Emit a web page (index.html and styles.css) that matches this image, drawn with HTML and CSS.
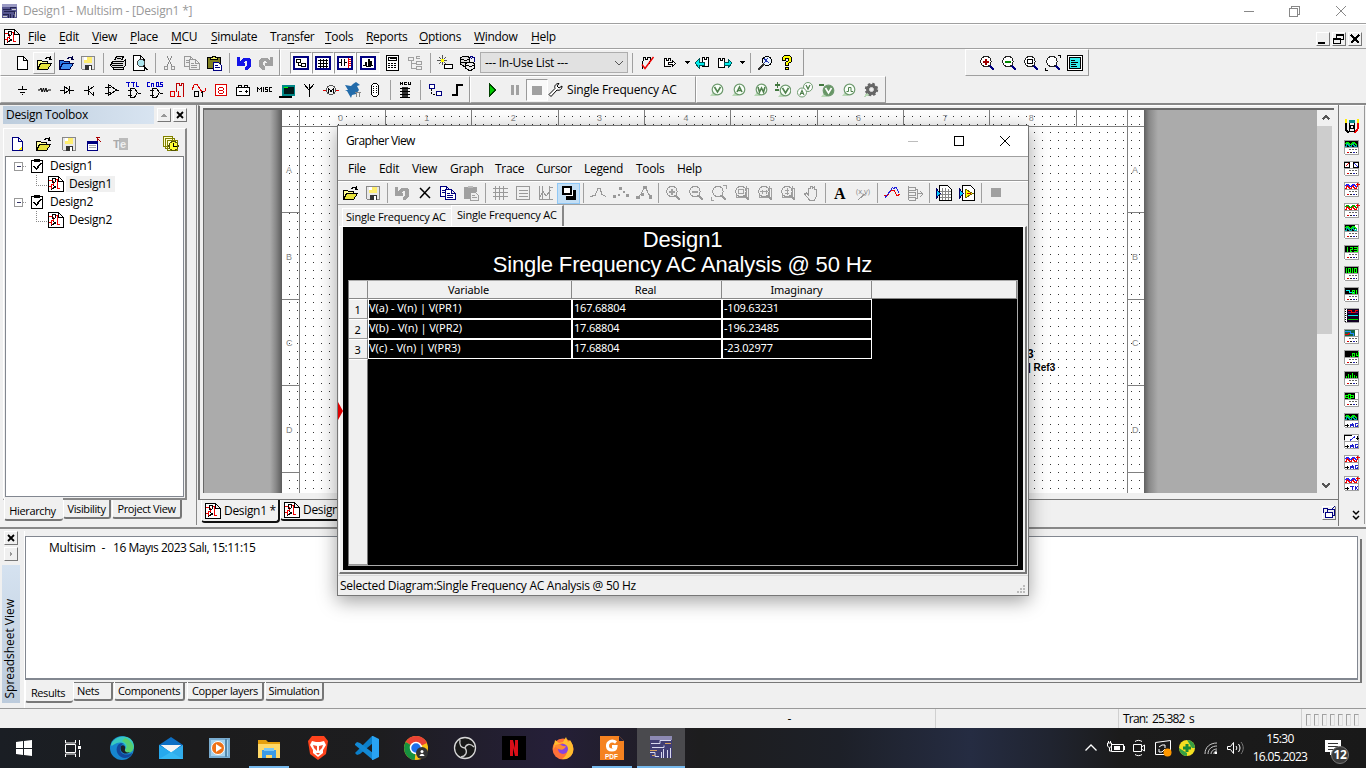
FILE: index.html
```html
<!DOCTYPE html>
<html lang="en">
<head>
<meta charset="utf-8">
<title>Design1 - Multisim - [Design1 *]</title>
<link rel="stylesheet" href="styles.css">
</head>
<body>
<header class="titlebar"><i data-icon="app"></i><span class="title-text">Design1 - Multisim - [Design1 *]</span><i data-icon="winmin" class="caption-btn"></i><i data-icon="winrestore" class="caption-btn"></i><i data-icon="winclose" class="caption-btn last"></i></header>
<nav class="menubar"><i data-icon="doc"></i>
<div class="main-menu"><span><u>F</u>ile</span><span><u>E</u>dit</span><span><u>V</u>iew</span><span><u>P</u>lace</span><span><u>M</u>CU</span><span><u>S</u>imulate</span><span>Tra<u>n</u>sfer</span><span><u>T</u>ools</span><span><u>R</u>eports</span><span><u>O</u>ptions</span><span><u>W</u>indow</span><span><u>H</u>elp</span></div>
<div class="mdi"><b data-icon="mdimin"></b><b data-icon="mdirestore"></b><b data-icon="mdiclose"></b></div></nav>
<div class="toolrow row1">
<div class="bar standard" data-tools="new open* openblue save | print preview | cut copygray pasteoil | undo redo"></div>
<div class="bar view" data-tools="hier! grid! sheet! wave!+ calc+ treegray | wizard database+"><div class="combo"><span>--- In-Use List ---</span><i data-icon="chev"></i></div></div>
<div class="bar tools2" data-tools="| erc out+ arr back fwd+ arr | find help"></div>
<div class="bar zoombar" data-tools="zin zout zarea zfit zfull"></div>
</div>
<div class="toolrow row2">
<div class="bar comps" data-tools="source resistor diode transistor opamp ttl cmos mixdig mixed indicator power misc periph rf motor ni connector | chip | hb bus"></div>
<div class="bar sim"><div class="simicons" data-tools="play pause stop!"></div><i data-icon="wrench"></i><span class="sim-label">Single Frequency AC</span></div>
<div class="bar probes" data-tools="pv pa pw pdv pav pvr pdig gear"></div>
</div>
<main class="middle">
<aside class="toolbox">
<div class="tb-caption"><span>Design Toolbox</span><b data-icon="uptri"></b><b data-icon="x"></b></div>
<div class="tb-frame">
<div class="tb-tools"><i data-icon="newy"></i><i data-icon="open"></i><i data-icon="save"></i><i data-icon="props"></i><i data-icon="te"></i><i data-icon="history" class="right"></i></div>
<div class="tree">
<div class="node"><i data-icon="minus"></i><i data-icon="check"></i><span>Design1</span></div>
<div class="node child"><i data-icon="doc"></i><span class="sel">Design1</span></div>
<div class="node"><i data-icon="minus"></i><i data-icon="check"></i><span>Design2</span></div>
<div class="node child"><i data-icon="doc"></i><span>Design2</span></div>
</div></div>
<div class="tabs tbtabs"><span class="on">Hierarchy</span><span>Visibility</span><span>Project View</span></div>
</aside>
<section class="workspace">
<div class="ws-frame"><div class="canvas"><div class="shade left"></div><svg class="sheet-page" id="sheet" width="862" height="384"></svg><div class="shade right"></div>
<div class="scroll"><i data-icon="sup"></i><div class="thumb"></div><i data-icon="sdown"></i></div></div></div>
<div class="doc-tabs"><div class="doctab on"><i data-icon="doc"></i><span>Design1 *</span></div><div class="doctab"><i data-icon="doc"></i><span>Design2</span></div><b data-icon="cascade" class="cascade"></b></div>
</section>
<aside class="instruments" id="instruments"></aside>
</main>
<section class="spreadsheet">
<div class="ss-side"><b data-icon="x"></b><b data-icon="righttri"></b><div class="ss-label"><span>Spreadsheet View</span></div></div>
<div class="ss-main"><div class="ss-log">Multisim &nbsp;-&nbsp; <span>16 Mayıs 2023 Salı, 15:11:15</span></div>
<div class="tabs sstabs"><span class="on">Results</span><span>Nets</span><span>Components</span><span>Copper layers</span><span>Simulation</span></div></div>
</section>
<footer class="status"><span class="dash">-</span><span class="blank"></span><span class="tran">Tran: 25.382 s</span><div class="leds"><s></s><s></s><s></s><s></s><s></s><s></s><s></s></div></footer>
<div class="taskbar">
<div class="apps"><i data-icon="t_win"></i><i data-icon="t_view"></i><i data-icon="t_edge"></i><i data-icon="t_mail"></i><i data-icon="t_media"></i><i data-icon="t_files" class="open"></i><i data-icon="t_brave"></i><i data-icon="t_code"></i><i data-icon="t_chrome"></i><i data-icon="t_obs"></i><i data-icon="t_netflix"></i><i data-icon="t_firefox"></i><i data-icon="t_pdf" class="open"></i><i data-icon="t_multi" class="active"></i></div>
<div class="tray"><i data-icon="y_up"></i><i data-icon="y_bat"></i><i data-icon="y_cam"></i><i data-icon="y_sync"></i><i data-icon="y_plus"></i><i data-icon="y_wifi"></i><i data-icon="y_vol"></i></div>
<div class="clock"><span class="time">15:30</span><span class="date">16.05.2023</span></div>
<div class="notif"><i data-icon="y_note"></i><span>12</span></div>
</div>
<div class="behind"><span class="b3">3</span><span>| Ref3</span></div>
<section class="grapher">
<div class="g-title"><span>Grapher View</span><i data-icon="winmin" class="dim"></i><i data-icon="gmax"></i><i data-icon="gclose"></i></div>
<div class="g-menu"><span>File</span><span>Edit</span><span>View</span><span>Graph</span><span>Trace</span><span>Cursor</span><span>Legend</span><span>Tools</span><span>Help</span></div>
<div class="g-tools" data-tools="open save | undogray del copy pastegray | ggrid glegend gcursor contrast^ | curve pts curvepts | gzin gzout gzfit gz1 gz2 gz3 hand | fontA xy | waves layers | excel labview | stopgray"></div>
<div class="g-tabs"><span>Single Frequency AC</span><span class="on">Single Frequency AC</span></div>
<div class="g-frame"><div class="g-black">
<div class="g-heading">Design1</div><div class="g-heading">Single Frequency AC Analysis @ 50 Hz</div>
<div class="g-table">
<div class="hd rowhd"></div><div class="hd">Variable</div><div class="hd">Real</div><div class="hd">Imaginary</div><div class="hd fill"></div>
<div class="num">1</div><div class="cell">V(a) - V(n) | V(PR1)</div><div class="cell v">167.68804</div><div class="cell v">-109.63231</div><div></div>
<div class="num">2</div><div class="cell">V(b) - V(n) | V(PR2)</div><div class="cell v">17.68804</div><div class="cell v">-196.23485</div><div></div>
<div class="num">3</div><div class="cell">V(c) - V(n) | V(PR3)</div><div class="cell v">17.68804</div><div class="cell v">-23.02977</div><div></div>
<div class="num rest"></div>
</div></div></div>
<div class="g-status"><span>Selected Diagram:Single Frequency AC Analysis @ 50 Hz</span><i data-icon="grip"></i></div>
<i data-icon="redtri" class="redtri"></i>
</section>
<script src="icons.js"></script>
</body>
</html>
```
FILE: styles.css
```css
*{box-sizing:border-box}
body{margin:0;width:1366px;height:768px;overflow:hidden;background:#f0f0f0;color:#000;font:12px/16px "Open Sans","Noto Sans",sans-serif;letter-spacing:-.32px;display:flex;flex-direction:column;position:relative}
i{font-style:normal;display:flex;align-items:center;justify-content:center;flex:none}
svg{display:block;flex:none}
u{text-decoration-thickness:1px;text-underline-offset:2px}
b[data-icon]{display:flex;align-items:center;justify-content:center;width:14px;height:14px;background:#f0f0f0;border:1px solid #fff;border-right-color:#777;border-bottom-color:#777;flex:none}
.titlebar{height:24px;background:#fff;border-bottom:1px solid #a0a0a0;display:flex;align-items:center;padding:0 0 2px 2px;color:#999;flex:none}
.title-text{margin-left:5px;flex:1;letter-spacing:-.21px}
.caption-btn{width:45px}
.caption-btn.last{width:50px}
.menubar{height:25px;display:flex;align-items:center;padding-left:4px;border-top:1px solid #fff;border-bottom:1px solid #a0a0a0;flex:none}
.main-menu{margin-left:8px;display:grid;grid-template-columns:31px 33px 38px 41px 40px 59px 55px 41px 53px 55px 57px 40px;flex:1}
.mdi{display:flex;gap:2px;padding:4px 4px 0 0}
.toolrow{height:27px;display:flex;flex:none}
.bar{display:flex;height:27px;align-items:center;border:1px solid #fff;border-right-color:#999;border-bottom-color:#a0a0a0;flex:none}
.tool{width:22px;height:22px;display:flex;align-items:center;justify-content:center;flex:none}
.tool.wide{width:24px}
.tool.arrow{width:9px}
.tool.pressed{border:1px solid #999;border-right-color:#fff;border-bottom-color:#fff;background:#f9f9f9}
.tool.raised{border:1px solid #fff;border-right-color:#999;border-bottom-color:#999}
.tool.lit{background:#c4dff5;border:1px solid #90c8f6;height:21px}
.sep{width:8px;height:20px;display:flex;flex:none}
.sep::before{content:"";margin:auto;width:1px;height:20px;background:#a0a0a0}
.standard{width:280px;padding-left:10px}
.view{width:348px;padding-left:9px;border-right:0}
.combo{width:148px;height:21px;border:1px solid #adadad;background:#e1e1e1;display:flex;align-items:center;justify-content:space-between;padding:0 0 0 4px;letter-spacing:-.25px;flex:none}
.tools2{width:176px;border-left:0;padding-left:0}
.zoombar{width:124px;margin-left:161px;padding-left:10px}
.comps{width:470px;padding-left:11px}
.sim{width:226px;padding-left:11px}
.simicons{display:flex}
.sim .sim-label{margin-left:3px;letter-spacing:-.18px}
.probes{width:190px;padding-left:9px}
.middle{height:423px;display:flex;flex:none;border-top:2px solid #888}
.toolbox{width:197px;border-right:1px solid #888;padding:1px 9px 0 3px;display:flex;flex-direction:column;flex:none;height:420px}
.tb-caption{height:18px;display:flex;align-items:center;gap:2px}
.tb-caption span{width:151px;height:18px;background:linear-gradient(90deg,#bdcddd,#d8e4f1);padding:1px 3px;margin-right:1px;letter-spacing:-.3px}
.tb-frame{height:372px;border:1px solid #fff;border-right:2px solid #888;border-bottom:2px solid #888;margin-top:4px;padding:2px 1px 0 1px;flex:none}
.tb-tools{height:25px;display:flex;align-items:center;padding:0 5px 0 4px;gap:10px}
.tb-tools .right{margin-left:auto}
.tree{height:341px;background:#fff;border:1px solid #828790;border-top-color:#777;padding:0 0 0 4px}
.node{height:18px;display:flex;align-items:center;gap:3px}
.node span{margin-left:2px;letter-spacing:-.28px}
.node.child{padding-left:26px;gap:1px}
.node.child::before{content:"";width:10px;height:10px;border:1px dotted #888;border-top:0;border-right:0;align-self:flex-start}
.node.child span{margin-left:1px;padding:0 3px}
.node .sel{background:#f0f0f0}
.tabs{display:flex;align-items:flex-start;font-size:11px;letter-spacing:-.38px}
.tabs span{border:1px solid #777;border-top:0;border-right:2px solid #777;border-bottom:2px solid #777;height:19px;text-align:center;border-radius:0 0 3px 3px;margin-right:1px;border-left-color:#fff;padding-top:1px}
.tabs .on{border-right:0;border-left-color:#fff;height:23px;padding:5px 3px 0 0;margin-top:-2px;background:#f0f0f0;z-index:1}
.tbtabs{margin-left:1px}
.tbtabs span{width:48px}.tbtabs .on{width:59px;margin-right:0}.tbtabs span:last-child{width:70px}
.workspace{width:1142px;flex:none;padding-left:1px;display:flex;flex-direction:column;border-right:1px solid #777}
.ws-frame{padding:2px 4px 2px 3px;height:395px;border-top:1px solid #fff;border-left:2px solid #777;border-bottom:1px solid #777;flex:none}
.canvas{height:385px;border-top:2px solid #696969;border-left:1px solid #696969;background:#ababab;display:flex;overflow:hidden}
.shade.left{width:78px;background:linear-gradient(90deg,#ababab 66px,#888 72px,#5b5b5b 78px)}
.shade.right{width:172px;background:linear-gradient(90deg,#606060,#888 5px,#ababab 14px)}
.sheet-page{background:#fff}
.scroll{width:17px;background:#f0f0f0;display:flex;flex-direction:column;margin-left:1px}
.scroll i{height:16px}
.scroll .thumb{height:208px;background:#cdcdcd;width:15px}
.scroll i:last-child{margin-top:auto}
.doc-tabs{display:flex;height:26px;padding-left:3px;align-items:flex-start}
.doctab{display:flex;align-items:center;height:21px;width:79px;padding-left:3px;border:1px solid #fff;border-top:0;border-right:2px solid #111;border-bottom:2px solid #111;border-radius:0 0 4px 4px;gap:3px;white-space:nowrap}
.doctab.on{height:23px}
.cascade{margin:6px 2px 0 auto}
.instruments{width:26px;flex:none;border-right:1px solid #999;border-top:1px solid #fff;padding:13px 0 0 5px;height:419px}
.instruments svg{margin-bottom:6px}
.instruments svg:last-child{margin:19px 0 0 6px}
.spreadsheet{height:181px;border-top:2px solid #888;display:flex;flex:none;padding-top:2px;margin-top:1px}
.ss-side{width:20px;padding-left:4px;display:flex;flex-direction:column;gap:2px}
.ss-label{width:18px;height:138px;margin:2px 0 0 -2px;background:linear-gradient(#d5e2f0,#bccbdc);display:flex;align-items:center;justify-content:center}
.ss-label span{writing-mode:vertical-rl;transform:rotate(180deg);letter-spacing:-.02px;white-space:nowrap;margin:30px 2px 0 0}
.ss-main{width:1336px;margin-left:4px;padding-top:5px;border-left:1px solid #fff}
.ss-log{height:144px;background:#fff;border:1px solid #828790;border-bottom-width:2px;box-shadow:inset 0 0 0 1px #fff,2px 2px #f0f0f0,4px 3px #777;padding:3px 0 0 23px;letter-spacing:-.2px;margin-right:2px}
.ss-log span{letter-spacing:-.48px;margin-left:2px}
.sstabs{margin-top:2px}
.sstabs span{width:40px}.sstabs .on{width:48px;margin-right:0}
.sstabs span:nth-child(3){width:71px}.sstabs span:nth-child(4){width:77px;margin-left:1px}.sstabs span:nth-child(5){width:59px}
.sstabs span:nth-child(2){text-align:left;padding-left:3px}
.status{height:20px;border-top:1px solid #999;display:flex;margin-top:auto;flex:none;line-height:20px}
.dash{width:936px;text-align:right;padding-right:144px;border-right:1px solid #d0d0d0}
.blank{width:183px;border-right:1px solid #d0d0d0}
.tran{width:183px;padding-left:4px;border-right:1px solid #d0d0d0;letter-spacing:-.8px;word-spacing:2px}
.leds{display:flex;padding:5px 0 0 4px;gap:3px}
.leds s{width:5px;height:12px;border:1px solid #a0a0a0;border-right-color:#ddd;border-bottom-color:#ddd}
.taskbar{height:40px;flex:none;display:flex;color:#fff;background:linear-gradient(90deg,#1a1e24 0,#1c1c1d 200px,#1d1d1f 380px,#251f38 550px,#1d1d1e 700px,#1d2028 840px,#252c42 970px,#202430 1050px,#1b1b1b 1120px,#191919)}
.apps{display:flex;width:1079px;gap:1px;padding-left:1px}
.apps i{width:48px;height:40px}
.apps i:first-child{margin-left:-1px}
.apps .open{border-bottom:2px solid #76b9ed;width:40px;margin:0 4px;padding-top:1px}
.apps .active{background:#4a4a4e;border-bottom:2px solid #76b9ed}
.tray{display:flex;width:168px}
.tray i{width:24px;height:40px}
.clock{width:66px;display:flex;flex-direction:column;text-align:center;padding-top:2px;letter-spacing:-.65px;line-height:18px}
.notif{width:53px;padding:12px 0 0 12px;position:relative}
.notif i{width:16px}
.notif span{position:absolute;left:18px;top:18px;width:18px;height:18px;border-radius:50%;background:#3a3a3a;border:1px solid #777;text-align:center;font-weight:bold;font-size:12px;line-height:15px}
.behind{position:absolute;left:1028px;top:347px;font:bold 10px/14px "Liberation Sans",sans-serif;letter-spacing:0;display:flex;flex-direction:column}
.b3{font-size:12px;margin-left:-1px}
.grapher{position:absolute;left:337px;top:125px;width:692px;height:471px;border:1px solid #777;background:#f0f0f0;box-shadow:0 5px 18px rgba(0,0,0,.38)}
.g-title{height:31px;background:#fff;border-bottom:1px solid #a0a0a0;display:flex;align-items:center;padding-left:8px}
.g-title span{flex:1;letter-spacing:-.6px}
.g-title i{width:46px}
.g-title .dim{opacity:.55}
.g-menu{height:24px;border-bottom:1px solid #999;display:grid;grid-template-columns:31px 33px 38px 45px 41px 48px 52px 41px 40px;padding:4px 0 0 10px;letter-spacing:-.3px}
.g-tools{height:24px;display:flex;align-items:center;border-top:1px solid #fff;border-bottom:1px solid #a0a0a0}
.g-tools .tool{width:23px}
.g-tools .sep{width:6px}
.g-tabs{height:21px;display:flex;padding:0 0 0 4px;align-items:flex-end;font-size:11px;letter-spacing:-.2px}
.g-tabs span{width:109px;height:18px;border-left:1px solid #fff;border-top:1px solid #fff;padding-left:3px;white-space:nowrap}
.g-tabs .on{width:113px;height:21px;border-right:2px solid #888;padding:1px 0 0 5px}
.g-frame{border:1px solid #fff;border-right:2px solid #777;border-bottom:2px solid #777;margin:0 1px;padding:0 3px 3px 3px;height:348px}
.g-black{height:343px;background:#000;width:680px;padding:0 5px}
.g-heading{font:22px/25px "Liberation Sans",Arial,sans-serif;letter-spacing:-.17px;color:#fff;text-align:center;margin-left:-1px}
.g-table{margin-top:3px;display:grid;grid-template-columns:19px 204px 150px 150px 1fr;grid-template-rows:18px 20px 20px 20px 1fr;height:286px;border:1px solid #aaa;border-left:1px solid #777;color:#fff;font:11px/17px "Noto Sans",sans-serif;letter-spacing:-.1px;width:670px}
.hd{background:#f0f0f0;color:#000;text-align:center;border-right:1px solid #888;border-bottom:1px solid #888}
.hd:nth-child(2){padding-right:2px}
.hd:nth-child(3){padding-right:2px}
.num{background:#f0f0f0;color:#000;text-align:center;border-right:1px solid #777;border-bottom:1px solid #999;border-top:1px solid #fff;line-height:19px;padding-right:1px}
.cell{border:1px solid #fff;line-height:16px;letter-spacing:-.05px}
.v{padding-left:1px;letter-spacing:-.2px}
.g-status{height:20px;border-top:1px solid #d8d8d8;margin-top:1px;display:flex;justify-content:space-between;padding:2px 2px 0 2px;letter-spacing:-.28px}
.redtri{position:absolute;left:0;top:276px}
```
FILE: icons.js
```js
const K='#000',G='#a0a0a0',N='#000080';
const p=(d,s=K,f='none',w=1)=>`<path d="${d}" stroke="${s}" fill="${f}" stroke-width="${w}"/>`;
const fl=(d,f=K)=>p(d,'none',f);
const t=(x,y,s,size,f,extra='')=>`<text x="${x}" y="${y}" font-size="${size}" fill="${f}" font-family="Liberation Sans" font-weight="bold" letter-spacing="0" ${extra}>${s}</text>`;
const c=(x,y,r,s,f='none',w=1)=>`<circle cx="${x}" cy="${y}" r="${r}" stroke="${s}" fill="${f}" stroke-width="${w}"/>`;
const I={};
I.app=fl('M0 1h15v14H0z','#56568f')+fl('M0 1h15v3H0z','#9b9bc5')+p('M1 6.5h7v-2h6M2 8.5h10v2M1 11.5h5v3M8.500 11v4M11.5 12v3','#23234f')+p('M10 6.500h4M1 13.500h4M13.500 9v5','#ccc');
I.doc=p('M.5.5h10l5 5v10H.5zM10.5.5v5h5',K,'#fff')+p('M1 4.5h3M1 10.5h2v3M11.5 12.5h-2v-9h-2M5.500 5v3h-2v2','#e00')+p('M4.500 2v5M5 2.500h2l1 1.500-1 2H5M5 9l3 3M7 9.500v1h-1M3 14l4-3');
I.new=p('M3.5 1.5h6l4 4v9h-10zM9.5 1.5v4h4',K,'#fff');
I.newy=p('M3.5 1.5h6l4 4v9h-10zM9.5 1.5v4h4',N,'#fff')+fl('M10 14l3-4v4z','#fe0');
const op=(a,b)=>p('M1.5 14.5v-9h4l1 1h5v2',K,a)+p('M1.5 14.5l3-6h11l-4 6z',K,b)+p('M9 3.5h1v-1h3v1h2M14.5 1v4M12.5 4.5h3');
I.open=op('#ff9','#e6e23c');I.openblue=op('#2979e8','#3d8cf0').replaceAll('#000','#004');
I.save=p('M1.5 1.5h13v13h-12l-1-1z','#888','#e8e8e8')+fl('M4 2h8v6H4z','#ffee70')+fl('M4 2h3v3H4z','#fff')+fl('M5 10h7v5H5z','#333')+fl('M9 11h2v4H9z','#fff');
I.print=p('M4.5 5.5l2-4h7l-2 4M2.5 6.5h11l2-2v6l-2 2h-11l-2-2zM3.5 12.5v2h10v-3',K,'#ddd')+p('M2 8.5h11M7 3.5h4M2 10.5h11',K);
I.preview=p('M1.5.5h7l4 4v11h-11zM8.5.5v4h4',K,'#fff')+c(9,8,3.5,'#444','#aee6ef')+p('M11.5 11l4 4',K,'none',2);
I.cut=p('M5 1l5 10M10 1L5 11','#888')+c(4,13,2,'#999')+c(11,13,2,'#999');
const cp=(s,f)=>p('M.5 1.5h6l3 3v7h-9zM6.5 1.5v3h3',s,f)+p('M5.5 4.5h6l4 4v6h-10zM11.5 4.5v4h4M7 8.5h3M7 10.5h6M7 12.5h6M2 5.5h3M2 7.5h3',s,f);
I.copygray=cp('#999','#eee');I.copy=cp(N,'#fff');
I.pasteoil=p('M1.5 2.5h13v11h-13z',K,'#808020')+p('M4.5 4.5v-2h2v-1h3v1h2v2z',K,'#ee6')+p('M7.5 7.5h5l3 3v5h-8zM9 10.5h3M9 12.5h5',N,'#fff');
I.pastegray=fl('M1 2h13v5h-6v7H1z',G)+fl('M5 1h5v2H5z','#bbb')+p('M7.5 7.5h5l3 3v5h-8zM9 10.500h3M9 12.500h5',G,'#eee');
const un=s=>fl('M1 2h3v4l3-3h6l2 2v6l-3 4h-3v-3l2-2V7l-1-1H9L7 8h2v3H1z',s);
I.undo=un('#1414e8');I.undogray=un(G);I.redo=`<g transform="matrix(-1 0 0 1 16 0)">${un(G)}</g>`;
const fr=s=>fl('M0 1h16v14H0z',N)+fl('M2 3h12v10H2z','#fff')+s;
I.hier=fr(p('M3.500 4.500h4v3h-4zM8.500 8.500h4v3h-4zM5.500 8v2.500h3'));
I.grid=fr(p('M3 5.500h10M3 8.500h10M3 11.500h10M5.500 4v9M8.500 4v9M11.500 4v9'));
I.sheet=fr(p('M2 7.500h2M4.500 4v7M7.500 4v7M8 7.500h2')+p('M11.500 3v10M11 4.500h3M11 6.500h3M11 8.500h3M11 10.500h3','#e00'));
I.wave=fr(p('M3 10.500h2v-3h1v4h2v-7h1v7h1v-5h1v4h2',K));
I.calc=p('M2.5.5h12v15h-12z',K,'#fff')+p('M4.5 2.5h8v3h-8zM6 4l2-1 2 1 2-1')+p('M4 8.5h9M4 10.5h9M4 12.5h9',K).replace('/>',' stroke-dasharray="2 1"/>');
I.treegray=p('M1.5 2.5h5v3h-5zM9.5 6.5h5v3h-5zM9.5 11.5h5v3h-5zM4 6v7h5M4 8.5h5M9 4V1.5h4M9 4l4-1',G);
I.wizard=p('M5.5 0v10M0 5.5h10M2 2l7 7M9 2L2 9','#555')+p('M4 5.5h3M5.5 4v3','#ff0','none',3)+p('M7.5 9.5h8v4h-8z',K,'#fff');
I.database=p('M.5 3l3-2h4l2 2v6l-3 2h-3l-3-2zM1 4l3 1h3l2-1M1 7h8',K,'#ddd')+p('M5.5 9l3-2h4l2 2v4l-3 2h-3l-3-2zM6 10l3 1h3l2-1',K,'#eee')+p('M14.5 7V2.5h-3M13 1l-3 1 2 2',N);
I.chev=p('M4 6l4 4 4-4','#555');
I.erc=p('M3.500 13.500v-4l1-7h2v2h2v-2h3l-1 7',K)+`<g shape-rendering="auto">${p('M3 9.500l3 4L14.500 2','#e00','none',1.400)}</g>`;
I.out=p('M2.500 11.500v-8h2v2h2v-2h2v2M2.500 11.500h6',K,'#fff')+p('M6.500 7.500h4v-2l3 3-3 3v-2h-4z',K,'#fff');
I.arr=fl('M1 6h6L4 9z');
I.back=p('M8.5 2.5h2v2h2v-2h2v9h-6z',K,'#fff')+p('M1 8l4-4v3h5v3H5v3z','#055','#0ee');
I.fwd=p('M1.5 3.5h2v2h2v-2h2v9h-6z',K,'#fff')+p('M15 8l-4-4v3H7v3h4v3z','#055','#0ee');
I.find=c(10,6,4.7,K,'#e8f4ff')+p('M7 9l-6 6','#333','none',2)+fl('M7 3l2 1 2-1-1 2 2 3-3-1-2 1 1-2z','#23a');
I.help=p('M3.500 5.500v-3l2-2h5l2 2v4l-3 2v2h-3v-3l3-2v-2h-3v2zM6.500 12.500h3v2h-3z',K,'#ff0');
const mg=(x,s='#222',h=N,f='#fff')=>c(7,6.5,5.2,s,f)+p('M11 11l4 4',h,'none',2.5)+x;
I.zin=mg(p('M4 6.500h6','#a00000','none',2)+p('M7 3.5v6','#a00000','none',2));I.zout=mg(p('M4 6.5h6','#080','none',2));
I.zarea=mg(p('M4.5 4.5h5v4h-5z'));I.zfit=mg(p('M13 .5h2.5V3M.5 13v2.5H3'));
I.zfull=p('M.5.5h15v15H.5z',K,'#fff')+fl('M2 2h12v12H2z',K)+fl('M3 3h10v10H3z','#3ee')+p('M4 5.5h4M4 7.5h7M4 9.5h5M4 11.5h6',K);
I.source=p('M7.500 4v3M3 7.500h9M5 10.500h5M7 12.500h1');I.resistor=`<g shape-rendering="auto">${p('M1 8h2l1-2 1 4 1.500-4 1 4 1.500-4 1 4 1-2h3')}</g>`;
I.diode=p('M1 8h4M11 8h4M10.5 4v8',K)+p('M5 4v8l5-4z');I.transistor=p('M3 8.500h4M7.500 4v9M8 8l5-4M8 9l4 4M12.500 10v4');
I.opamp=p('M2 5h3M2 11h3M5.5 2.5v11l8-5.5zM13 8h3M6 5.5h2M6 10.5h2');
const gt=(x)=>x+p('M3 8.5h4M3 13.5h4M5.5 6.5h4l3 4-3 5h-4zM13 11h3');
I.ttl=gt(p('M1 .500h4M3.500 0v5M6 .500h4M8.500 0v5M11.500 0v5M11 4.500h3','#0000c8'));
I.cmos=gt(p('M3 .500H.500v4H3M4.500 5V.500M5 1.500h1M6.500 1v4M9 .500h2v4H9zM15.500.500H13v2h2v2h-3','#0000c8'));
I.mixdig=p('M7.5 10V1.5h3v2h2v-2h2V15','#b00')+p('M1.500 9.500h4v5h-4zM9.500 9v6M8 14.500h4','#d00','none',1.600);
I.mixed=p('M1 8l2-5 3-1 3 5 2 3 3-1 1-3','#d00')+p('M3.500 9.500h4v5h-4zM11.500 9v6M10 10.500h2',K,'none',1.600);
I.indicator=p('M2.500 2.500h11v11h-11z','#d00','#fff')+p('M6 5.500h4M6 8.500h4M6 11.500h4M5.500 6v2M5.500 9v2M10.500 6v2M10.500 9v2','#d00');
I.power=p('M1.5 5.5h13v8h-13zM3.5 5V3.5h3V5M9.5 5V3.5h3V5M4 9.5h3M10 9.5h3M11.5 8v3',K,'#fff');
I.misc=p('M.5 10V5M1.500 6v1M2.500 7v1M3.500 6v1M4.500 5v5M6.500 5v5M11 5.500H8.500v2h2v2H8M15 5.500h-2.500v4H15');
I.periph=p('M3.5 3.5h12v9h-12z','#088','#001a1a',2)+p('M5 5.5h4','#0f0')+p('M0 14.5h13',K,'none',2);
I.rf=p('M3 2l5 6 5-6M8 2v13');I.motor=c(8,8,4.5,'#555')+p('M0 8h3M13 8h3','#d00')+p('M5.500 11V6.500l2.500 3 2.500-3V11',K);
I.ni=`<g shape-rendering="auto">${fl('M0 3l6 1 2-2 3-2 4 3-3 1 2 4-3 4-4 1-1 3-4-7-2-1 3 0z','#226baa')}</g>`+p('M10 10.500h6M11.500 11v4M14.500 11v4','#888');
I.connector=p('M4.500 3.500l2-2h3l2 2v9l-2 2h-3l-2-2z',K,'#fff')+p('M6.500 4v8M9.500 4v8',K).replace('/>',' stroke-dasharray="1 1"/>');
I.chip=fl('M5 5h6v11H5z','#333')+p('M3 6.5h10M3 9.5h10M3 12.5h10M3 15h10')+p('M3.500 0v3M4 1.500h1M5.500 0v3M7.500 0v3M8 2.500h2M8 .500h2M11.500 0v3M13.500 0v3M12 2.500h1');
I.hb=p('M2.5 2.5h5v4h-5zM9.5 9.5h5v4h-5z',N,'#fff')+p('M4.5 7v5h5',K).replace('/>',' stroke-dasharray="2 1"/>');I.bus=p('M3 13h5V3h6',K,'none',2);
I.play=p('M4.5 2v12l6-6z','#004000','#0c0');I.pause=fl('M4 3h3v10H4zM9 3h3v10H9z',G);I.stop=fl('M3 4h10v9H3z',G);I.stopgray=fl('M3 3h10v9H3z',G);
I.wrench=`<g shape-rendering="auto">${p('M3 14.500l-2-2 6-6c-1-3 1-5 4-5L9 4l2 2 3-2c0 3-2 5-5 4z',K,'#fff')}</g>`;
const V='M5.500 5l3 5 3-5',A='M6 10l2.500-5 2.500 5M7 8.500h3',W='M5 5l1.500 5L8.500 6l2 4L12 5';
const pr=(s,x='',f='#f8fff8',g='#50804d')=>`<g shape-rendering="auto">${fl('M5 9l2 2 2 1-2 2H1z','#b8d8b5')}${c(8.5,7.5,5.3,'#6f9b6f',f,1.2)}${p(s,g,'none',1.6)}${x}</g>`;
I.pv=pr(V);I.pa=pr(A);I.pw=pr(W);I.pdv=`<g transform="translate(2 1)">${pr(V)}</g>`+p('M0 3h5M2.5 0v6M0 8h4','#437840','none',1.5);
I.pav=`<g shape-rendering="auto">${c(11,5,4.5,'#6f9b6f','#fff')}${p('M9 3l2 4 2-4','#50804d','none',1.3)}${c(5,10.5,4.5,'#6f9b6f','#fff')}${p('M3 13l2-4.500L7 13M4 11.500h2','#50804d','none',1.2)}</g>`;
I.pvr=`<g transform="translate(1 1)">${pr(V,'','#679565','#fff')}</g>`+p('M0 3h5','#437840','none',2);
I.pdig=pr('',p('M5.500 9.500h2v-4h2.500v4h2','#50804d'));
I.gear=fl('M1 15l3-6 3 4z','#b8d8b5')+`<g shape-rendering="auto">${c(8.5,7.5,5.2,'#666','#666',3).replace('/>',' stroke-dasharray="2.3 1.8"/>')}${c(8.5,7.5,3.8,'#666','none',3)}${c(8.5,7.5,2,'#ddd','#f0f0f0')}</g>`;
const win=(d,s)=>`<g shape-rendering="auto">${p(d,s)}</g>`;
I.winmin=p('M3 8.5h10','#888');I.winrestore=p('M3.5 5.5h8v8h-8zM5.5 5V3.5h8v8H12','#888');I.winclose=win('M3 3l10 10M13 3L3 13','#888');
I.mdimin=fl('M3 11h7v2H3z');I.mdirestore=p('M5.5 6.5V3.5h7v5h-3')+p('M5 4h8',K,'none',2)+p('M2.5 7.5h7v5h-7z')+p('M2 8h8',K,'none',2);I.mdiclose=p('M4 4l8 8M12 4l-8 8',K,'none',2.3);
I.gmax=p('M3.500 3.500h9v9h-9z');I.gclose=win('M3 3l10 10M13 3L3 13',K);
I.uptri=fl('M5 9.5h6L8 6z','#999');I.x=win('M5 5l6 6M11 5l-6 6',K).replace('stroke-width="1"','stroke-width="1.8"');I.righttri=fl('M6.500 5v6l3-3z','#999');
I.props=p('M.5 5.5h10v9H.5z',N,'#fff')+fl('M0 5h11v3H0z',N)+p('M2 9.500h7M2 11.5h7','#aaa')+p('M14 6l-5-5M10 1.500h3M10.500 1v4','#a00');
I.te=fl('M6 2h9v12H6z','#bbb')+t(0,12,'T',11,'#aaa')+t(7,12,'e',11,'#eee');
I.history=p('M.5.5h9v10h-9zM2.5 2.5h9v10h-9zM4.500 4.500h10v10h-10z','#808000','#ffc')+c(10.500,10,4.5,'#550','#ff3',1.4)+p('M10.500 7v3.500h3');
I.minus=p('M4.500 4.500h8v8h-8z','#999','#fff')+p('M6.500 8.500h4','#336')+p('M13 8.500h3','#999').replace('/>',' stroke-dasharray="1 1"/>');
I.check=p('M2.500 2.500h11v12h-11z',K,'#fff')+fl('M5 1h6v3H5z')+p('M5 8l2.500 3L12 5',K,'none',1.6);
I.sup=p('M4.500 9.500L8 6l3.500 3.500','#555','none',2);I.sdown=p('M4.500 6.500L8 10l3.500-3.500','#555','none',2);
I.cascade=p('M2.500 8V3.500H7M6.500 7V4.500h7v6H12',N,'#eee')+p('M4.500 7.500h7v5h-7z',N,'#fff')+p('M11 4l3-3',N);
I.del=win('M3 3l10 10M13 2L3 13',K).replace('stroke-width="1"','stroke-width="1.5"');
I.ggrid=p('M1 3.500h15M1 7.500h15M1 11.500h15M3.500 1v14M7.500 1v14M11.500 1v14','#999');
I.glegend=p('M1.500 1.500h13v13h-13zM4 5.500h9M4 8.500h9M4 11.500h9','#999');
I.gcursor=p('M1.500 1v14M1 14.500h14M4.500 1v13M11.500 1v13M2 12l3-6 3 5 5-6M11 2.500h4','#999');
I.contrast=fl('M5 5h10v10H5z')+fl('M1 1h10v9H1z')+fl('M3 3h6v5H3z','#fff')+p('M5 10.500h6.500V5','#fff');
I.curve=p('M0 11.500l5-1 3-7 2 0 2 6 4 2','#999');
I.pts=fl('M0 10h3v3H0zM6 2h3v3H6zM13 9h3v3h-3zM5 9h2v2H5zM10 6h2v2h-2z','#999');
I.curvepts=p('M2 12l3-3 3-6 2 0 2 5 3 4','#999')+fl('M0 11h4v3H0zM7 1h4v3H7zM5 8h3v3H5zM13 10h3v4h-3z','#999');
const gg=x=>mg(x,'#999','#999','#eee');
I.gzin=gg(p('M4 6.500h6M7 4v6',G,'none',2));I.gzout=gg(p('M4 6.500h6',G,'none',2));I.gzfit=gg(p('M12 .5h3.500V4M.5 12v3.500H3',G));
const gf=p('M2.500 3.500h12v9h-12zM12.500 1v13',G);I.gz1=gf+gg(p('M4.500 4.500h5v4h-5z',G));I.gz2=gf+gg(p('M3 6.500h8M5 4.500v4M9 4.500v4',G));I.gz3=gf+gg(p('M7 3v7M5 5.500h4M5 8.500h4',G));
I.hand=p('M6.500 15l-5-6 2-1 2 2V4l2-1V1.500h2V3l2-1v2l2 0v7l-2 4z','#999','#eee');
I.fontA='<text x="2" y="14" font-size="16" font-weight="bold" font-family="Liberation Serif" fill="#000">A</text>';
I.xy='<text x="1" y="9" font-size="8" textLength="14" lengthAdjust="spacingAndGlyphs" letter-spacing="0" fill="#888">(x,y)</text>'+p('M3 15l8-7','#999');
I.waves=p('M0 11l4-1 3-5 3 0 3 6 3-2','#e00')+p('M1 13L9 2M9 4l3-2 3 6','#22d');
I.layers=p('M1.500 1v14M2 2.500h6v3H2M2 7.500h6v3H2M2 12.500h6v3H2M8 4h2v9H8M10 8.500h6M13 6l3 3-3 3','#999');
I.excel=p('M3.500.5h8l4 4v11h-12z',K,'#fff')+p('M4 6.500h11M4 9.500h11M4 12.500h11M6.500 3v12M9.500 3v12M12.500 4v11','#888')+p('M.5 4v9l4-4.500z','#006','#0cf');
I.labview=p('M3.500.5h8l4 4v11h-12z',K,'#fff')+p('M6 4v9l8-4.500z','#660','#ff0')+p('M.5 4v9l4-4.500z','#006','#0cf')+p('M8 8.500h4','#c00');
I.grip=fl('M13 6h2v2h-2zM10 9h2v2h-2zM13 9h2v2h-2zM7 12h2v2H7zM10 12h2v2h-2zM13 12h2v2h-2z','#bbb');
I.redtri=fl('M0 0l5 9-5 9z','#e00000');

/* Taskbar artwork, 24px box */
const B={};
B.t_win=fl('M4 6l7-1v7H4zM12 5l8-1v8h-8zM4 13h7v6l-7-1zM12 13h8v7l-8-1z','#fff');
B.t_view=p('M4.500 8.500h10v8h-10zM4.500 4v3h10V4M4.500 21v-3h10v3M18.500 4v5M18.500 14v7','#fff')+fl('M17 10h3v3h-3z','#fff');
B.t_edge=c(12,12,12,'none','#1686cf')+fl('M1 9C4-2 23-3 24 10c0 6-7 7-9 4 3-5-3-9-8-7-3 1-5 4-6 2z','#38c9c0')+fl('M15 2c8 3 11 11 6 14-3 2-7 0-6-2 3-4 2-7-3-9z','#56cf70')+fl('M8 9c-4 6 1 13 7 13 4 0 7-3 7-5-7 4-14 0-11-7 1-2 2-2 3-2-2-1-4-1-6 1z','#12479a')+fl('M11 10c2-2 5 0 4 3s2 4 5 3c-5 4-11 0-9-6z','#1c2025');
B.t_mail=fl('M0 9L12 1l12 8v14H0z','#0d6fc4')+fl('M2 9h20L12 17z','#fff')+fl('M0 9l24 14H0z','#26a9ee')+fl('M24 9v14H0z','#3bbcf5').replace('/>',' opacity=".8"/>')+fl('M2 9h20L12 16z','#f4f4f4');
B.t_media=p('M2 3h19v18H2z','#79acd0','#a6d2ed',2)+p('M18 3v18','#5388ab','none',2)+c(10,12,6.500,'#fff','#ef7115')+fl('M8 8v8l6-4z','#fff');
B.t_files=fl('M1 4h8l2 2h12v16H1z','#e5a00e')+fl('M1 8h22v14H1z','#ffd968')+fl('M5 14h14v8h-4v-3H9v3H5z','#3b9be6')+fl('M7 12h10v3H7z','#7cc7f3');
B.t_brave=fl('M6 0h12l4 5-2 13-8 6-8-6L2 5z','#ff431c')+fl('M6 5l4 1h4l4-1 2 4-3 5 0 3-5 4-5-4 0-3-3-5z','#fff')+fl('M7 9l4 1v5l-3-3zM17 9l-4 1v5l3-3zM10 17h4l-2 2z','#f04a2a');
B.t_code=fl('M18 0v7L5 18l-3 1-2-2L17 0z','#0b7fc9')+fl('M0 8l2-2 3 1 13 10v7L0 9z','#1389d4')+fl('M17 0h1l6 3v18l-6 3h-1z','#29a3f2');
B.t_chrome=c(12,12,12,'none','#fbc116')+fl('M12 12L1.700 6A12 12 0 0 1 23 7z','#ea4335')+fl('M12 12L1.700 6a12 12 0 0 0 9 18z','#16913f')+c(12,12,5.500,'#fff','#1d70ed',1.500)+c(18,17,6,'none','#333')+c(18,15.500,1.500,'none','#fff')+fl('M15.500 20c1-3 4-3 5 0z','#fff');
B.t_obs=c(12,12,10.500,'#d8d8d8','#191919',1.300)+p('M7 4c-1 5 1 8 5 8M21 11c-4-4-8-3-9 1M8 21c5-1 7-5 4-9','#ccc','none',1.300);
B.t_netflix=fl('M0 0h24v24H0z')+fl('M8 4h3l2 8V4h3v16h-3l-2-8v8H8z','#d90e18');
B.t_firefox=c(12,13,10.500,'none','#ff7139')+fl('M4 4l4 3 4-1 3-5 2 5 2-2c8 12 0 20-8 19 6-4 7-10 1-16-5 1-9 3-10 8z','#ffbd2e')+c(12,13,5,'none','#8745df')+fl('M3 10c5-4 8 1 12 0-2 5-6 4-9 2z','#ff8b32');
B.t_pdf=fl('M0 0h19l5 5v19H0z','#f58220')+fl('M19 0l5 5h-5z','#252238')+p('M16 6.500C12 3 7 6 7.500 10.500s8 5 8.500 0h-4','#fff','none',3)+t(5,23,'PDF',6.500,'#fff');
B.t_multi=fl('M1 1h22v22H1z','#413e74')+fl('M1 1h22v4H1z','#8d8ab4')+p('M2 8.500h9v-3h11M3 12.500h12v-2M1 17.500h5v4h4M14.500 14v9M18.500 15v8M21.500 13v10M12.500 17v6','#d8d8ee')+p('M1 15.500h7M16 8.500h6M3 20.500h3','#dba35c');
B.y_up=p('M6.500 14.500l5.500-5.500 5.500 5.500','#fff','none',1.300);
B.y_bat=p('M8.500 8.500h12v7h-12zM21.500 10v4M4.500 7v3l2 2 2-2V7zM5.500 5v2M7.500 5v2M6.500 12v3h2','#fff')+fl('M11 10h6v4h-6z','#fff');
B.y_cam=p('M6.500 8.500h8v7h-8zM14.500 11l3-2v6l-3-2M8 5.500c2-1.500 5-1.500 7 0M8 18.500c2 1.500 5 1.500 7 0','#fff');
B.y_sync=p('M4.500 6.500l15-2v14h-15z','#fff')+p('M8 11l3-2h3v3M14 13l-3 3H8v-3','#fff')+c(16.500,16.500,4,'none','#ff9800');
B.y_plus=c(12,12,8,'none','#f4df22')+fl('M12 4a8 8 0 0 1 8 8h-3M4 12a8 8 0 0 0 8 8v-3','#36a043')+p('M12 8v8M8 12h8','#188837','none',3);
B.y_wifi=p('M6 18C6 11 11 7 18 7M9 18c0-5 4-8 9-8M12 18c0-3 3-5 6-5','#ccc')+p('M15 18c0-2 1-3 3-3','#fff')+fl('M16 16h2v2h-2z','#fff');
B.y_vol=p('M4.500 10.500h3l3-4v11l-3-4h-3zM13 10c1 1.500 1 2.500 0 4M15.500 8c2 3 2 5 0 8','#fff')+p('M18 6c3 4 3 8 0 12','#777');
I.y_note=fl('M0 0h16v12H8l-3 4v-4H0z','#fff')+p('M3 3.500h10M3 6.500h10M3 9.500h7','#333');
function svg(n){return B[n]?`<svg width="24" height="24" viewBox="0 0 24 24">${B[n]}</svg>`:n==='redtri'?`<svg width="6" height="18">${I[n]}</svg>`:`<svg width="16" height="16" viewBox="0 0 16 16" shape-rendering="crispEdges">${I[n]}</svg>`;}
document.querySelectorAll('[data-icon]').forEach(e=>{e.innerHTML=svg(e.dataset.icon);});
document.querySelectorAll('[data-tools]').forEach(e=>{
  e.insertAdjacentHTML('afterbegin',e.dataset.tools.split(' ').map(x=>{
    if(x==='|')return '<div class="sep"></div>';
    const n=x.replace(/[!*+^]/g,'');
    const k=(x.includes('!')?' pressed':'')+(x.includes('*')?' raised':'')+(x.includes('+')?' wide':'')+(x.includes('^')?' lit':'')+(n==='arr'?' arrow':'');
    return `<div class="tool${k}">${n==='arr'?svg(n).replace('width="16"','width="8"').replace('0 0 16','0 0 8'):svg(n)}</div>`;
  }).join(''));
});
/* Drawing sheet: grid dots, border zones and their labels */
let dots='',zones='M17.500 0V384M845.500 0V384M0 16.500H862',labels='';
for(let x=7;x<862;x+=8.095)for(let y=6;y<384;y+=8.095)dots+=`M${Math.round(x)} ${Math.round(y)}h1v1h-1z`;
for(let k=0;k<9;k++){const x=Math.round(104+86.35*k);if(x<845)zones+=`M${x-.5} 0V16`;labels+=`<text x="${56+86.35*k}" y="11">${k}</text>`;}
for(let k=0;k<5;k++){const y=Math.round(103+86.500*k);zones+=`M0 ${y-.5}H17M845 ${y-.5}H862`;if(k<4)labels+=`<text x="4" y="${63+86.500*k}">${'ABCD'[k]}</text><text x="850" y="${63+86.500*k}">${'ABCD'[k]}</text>`;}
document.getElementById('sheet').innerHTML=`<g shape-rendering="crispEdges"><path d="${dots}" fill="#333"/><path d="${zones}" stroke="#808080"/></g><g font-family="Liberation Sans" font-size="9" fill="#888" letter-spacing="0">${labels}</g>`;
/* Instrument strip */
const scr=(body,f='#000')=>fl('M1 1h13v6H1z',f)+body;
const zig=(a,b='#0b0')=>p('M1 6.500h1v-2h1v-1h1v2h1v1h2v-2h1v-1h1v2h1v1h2v-2h1',b)+p('M1 3.500h1v-1h2v1h1v1h2v-1h1v-1h2v1h1v1h2',a);
const dash=(d,s)=>p(d,s).replace('/>',' stroke-dasharray="2 1"/>');
const pins=dash('M3 12.500h10','#222')+p('M3 12.500h2','#d00')+p('M9 12.500h2','#22a')+dash('M5 9.500h8','#666');
const tag=(n)=>n==='AG'?p('M6.500 14v-3h3v3M7.500 10.500h1M7 12.500h3M14 10.500h-2.500v3h2v-2','#22c'):p('M6 10.500h4M8.500 10v4M11.500 10v4M14 10l-2 2 2 2','#22c');
const cross=p('M13.500 1v4M11.500 2.500h4','#e00');
const ins=[
 p('M1.5 4v6l3 4','#000','none',2)+p('M13.5 4v6l-3 4','#e00','none',2)+p('M1.5 0v4M13.5 0v4','#fe0','none',2)+fl('M5 1h6v3H5z','#088')+p('M5.500 4v8h5V4',K)+c(8,8,2,K),
 scr(zig('#0e0','#0aa')+pins),
 p('M.500 1.500h5v5h-5zM9.500 1.500h5v5h-5z',K,'#fff')+p('M2 5l3-3','#e00')+p('M10 2l4 4','#22d')+pins,
 scr(zig('#22f','#e00')+pins+cross,'#fff'),
 scr(zig('#0a0','#e00')+pins+cross,'#fff'),
 scr(zig('#0e0','#0aa')+pins).replace('h13v6','h10v6'),
 scr(p('M3.500 2v5M6 2.500h2v2H6v2h2M10 2.500h3v4h-3M10 4.500h3','#0f0')+pins),
 scr(p('M2.500 2v5M4.500 2.500h2v4h-2zM8.500 2v5M10.500 2.500h2v4h-2z','#0f0')+pins),
 scr(p('M2 3.500h3v2h5','#0ee')+p('M8.500 6.500h2v-3h-2zM12.500 3v4','#0f0')+pins),
 fl('M3 1h12v13H3z','#102')+p('M4 2.500h3v2h4v-2h3','#e00')+p('M4 4.500h3M11 4.500h3','#808')+p('M4 7.500h10','#0ee')+p('M4 11.500h10','#0d0')+p('M1.500 1v13',K).replace('/>',' stroke-dasharray="1 1"/>'),
 scr(p('M1 5.500h3v-1h6','#e00')+p('M1 2.500h5v2h3v2','#28f')+pins,'#164').replace('h13v6','h10v6'),
 scr(p('M6 6.500h1M8.500 3.500h2v3h-2zM12.500 3v2h2M14.500 2v5','#0f0')+pins),
 scr(p('M2.500 5v2M4.500 3v4M6.500 4v3M8.500 2v5M10.500 4v3M12.500 5v2','#0f0')+pins),
 scr(p('M1.500 3.500h3v2h-3zM6.500 3.500h3v2h-3zM4 2.500h3M4 6.500h3','#0f0')+pins).replace('h13v6','h10v6'),
 scr(zig('#0e0','#0aa')+tag('AG')),
 scr(p('M6 6.500l5-4','#22d')+p('M.5 6V1.500h7')+p('M13.500 2v4M12 4.500h3')+tag('AG'),'#fff'),
 scr(zig('#22f','#e00')+cross+tag('AG'),'#fff'),
 scr(zig('#22f','#e00')+cross+tag('TK'),'#fff')
];
document.getElementById('instruments').innerHTML=ins.map((s,i)=>`<svg width="16" height="15" viewBox="0 0 16 15" shape-rendering="crispEdges">${i?fl('M0 0h15v15H0z','#fff')+p('M.5 14V.500h14M.5 14.500h14V1',G):''}${i?p('M0 7.500h15',G):''}${s}${i>13?p('M1 12.500h4M3.500 11v3'):''}</svg>`).join('')+`<svg width="12" height="12">${p('M3 1l3 3 3-3M3 6l3 3 3-3',K,'none',1.500)}</svg>`;
```
